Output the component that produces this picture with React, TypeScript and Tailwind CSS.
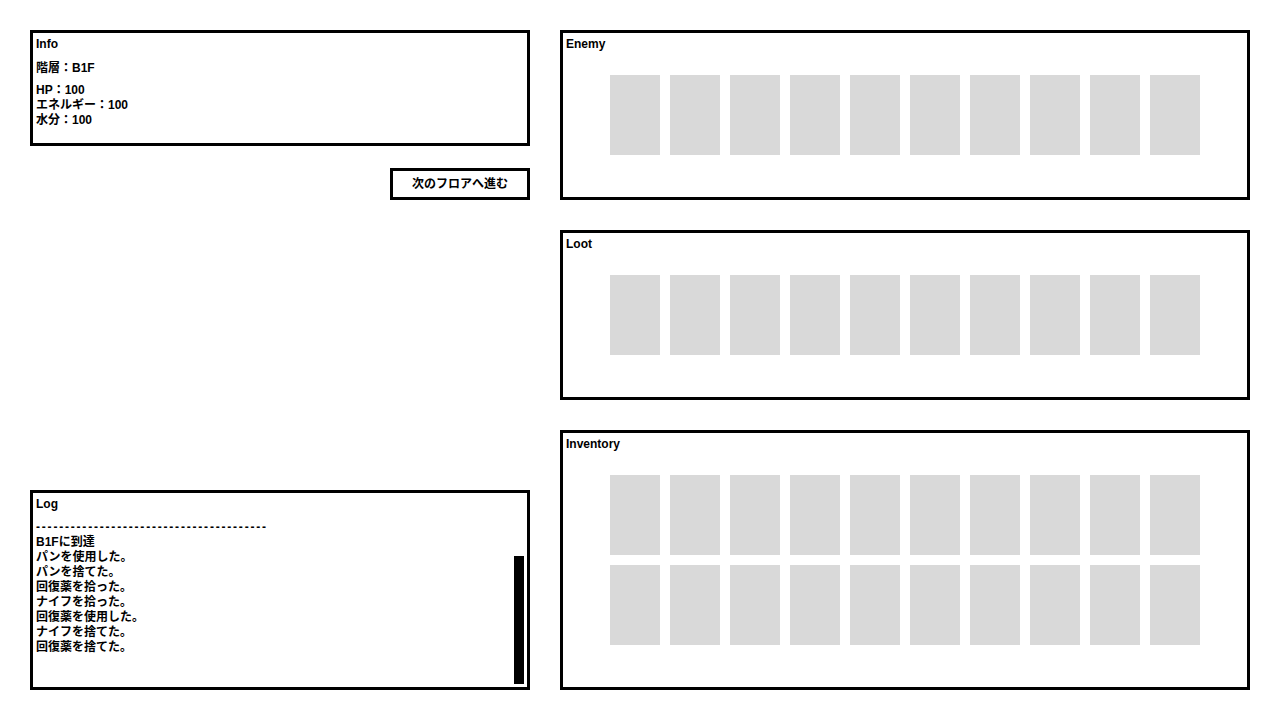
import React from "react";

const font = { fontFamily: '"Liberation Sans", "Noto Sans CJK JP", sans-serif' };

const logLines = [
  "パンを使用した。",
  "パンを捨てた。",
  "回復薬を拾った。",
  "ナイフを拾った。",
  "回復薬を使用した。",
  "ナイフを捨てた。",
  "回復薬を捨てた。",
];

function CardRow() {
  return (
    <div className="flex justify-center gap-[10px]">
      {Array.from({ length: 10 }).map((_, i) => (
        <div key={i} className="w-[50px] h-[80px] bg-[#d9d9d9]" />
      ))}
    </div>
  );
}

function Panel({ title, rows, height }: { title: string; rows: number; height: string }) {
  return (
    <div className={`border-[3px] border-black p-[3px] ${height}`}>
      <div className="leading-[15px] pt-[1px]">{title}</div>
      <div className="mt-[23px] flex flex-col gap-[10px]">
        {Array.from({ length: rows }).map((_, i) => (
          <CardRow key={i} />
        ))}
      </div>
    </div>
  );
}

export default function App() {
  return (
    <div
      className="w-[1280px] h-[720px] bg-white text-black text-[12px] font-bold p-[30px] flex gap-[30px]"
      style={font}
    >
      {/* left column */}
      <div className="w-[500px] flex flex-col justify-between">
        <div>
          <div className="h-[116px] border-[3px] border-black p-[3px] pt-[4px] leading-[15px]">
            <div>Info</div>
            <div className="mt-[9px]">階層：B1F</div>
            <div className="mt-[7px]">
              <div>HP：100</div>
              <div>エネルギー：100</div>
              <div>水分：100</div>
            </div>
          </div>
          <div className="flex justify-end mt-[22px]">
            <button className="w-[140px] h-[32px] border-[3px] border-black bg-white text-[12px] font-bold flex items-center justify-center">
              次のフロアへ進む
            </button>
          </div>
        </div>

        <div className="h-[200px] border-[3px] border-black p-[3px] pt-[4px] pb-0 leading-[15px] flex flex-col">
          <div>Log</div>
          <div className="mt-[8px] tracking-[1.8px] whitespace-nowrap">
            {"-".repeat(40)}
          </div>
          <div>B1Fに到達</div>
          <div className="flex-1 flex justify-between pb-[3px]">
            <div>
              {logLines.map((l, i) => (
                <div key={i}>{l}</div>
              ))}
            </div>
            <div className="w-[10px] mt-[6px] bg-black" />
          </div>
        </div>
      </div>

      {/* right column */}
      <div className="w-[690px] flex flex-col gap-[30px]">
        <Panel title="Enemy" rows={1} height="h-[170px]" />
        <Panel title="Loot" rows={1} height="h-[170px]" />
        <Panel title="Inventory" rows={2} height="h-[260px]" />
      </div>
    </div>
  );
}
